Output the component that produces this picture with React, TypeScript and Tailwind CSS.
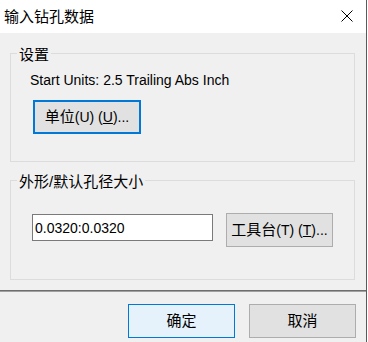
import React from "react";

const font = { fontFamily: '"Liberation Sans", "Noto Sans CJK SC", sans-serif' };

function Cjk({ children }: { children: React.ReactNode }) {
  return <span className="text-[15px]">{children}</span>;
}

function GroupBox({ title, className, children }: { title: string; className: string; children: React.ReactNode }) {
  return (
    <div className={`relative border border-[#dcdcdc] ${className}`}>
      <div className="absolute left-[6px] top-[-9px] h-[20px] bg-[#f0f0f0] px-[2px] text-[15px] leading-[20px] text-black">
        {title}
      </div>
      {children}
    </div>
  );
}

export default function App() {
  return (
    <div className="flex h-[342px] w-[368px] overflow-hidden bg-white text-[14px] leading-[20px] text-black" style={font}>
      <div className="flex w-[366px] flex-col bg-[#f0f0f0]">
        <div className="flex h-[33px] shrink-0 items-center justify-between bg-white pl-[4px] pr-[13px]">
          <span className="text-[15px] leading-[20px]">输入钻孔数据</span>
          <svg width="12" height="12" viewBox="0 0 12 12" className="mb-[1px]">
            <path d="M0.5 0.5 L11.5 11.5 M11.5 0.5 L0.5 11.5" stroke="#000" strokeWidth="1" fill="none" />
          </svg>
        </div>
        <div className="flex flex-col pl-[10px] pr-[11px] pt-[20px]">
          <GroupBox title="设置" className="h-[109px]">
            <div className="flex flex-col items-start pl-[19px] pt-[16px]">
              <div className="leading-[20px]">Start Units: 2.5 Trailing Abs Inch</div>
              <button className="ml-[3px] mt-[10px] flex h-[34px] w-[108px] items-center justify-center border-2 border-[#0078d7] bg-[#e1e1e1] leading-[20px]">
                <Cjk>单位</Cjk>(U) (<span className="underline">U</span>)...
              </button>
            </div>
          </GroupBox>
          <GroupBox title="外形/默认孔径大小" className="mt-[18px] h-[100px]">
            <div className="flex items-start pl-[21px] pt-[32px]">
              <div className="mt-[1px] flex h-[27px] w-[181px] items-center border border-[#7a7a7a] bg-white pl-[2px] leading-[20px]">
                0.0320:0.0320
              </div>
              <button className="ml-[13px] flex h-[34px] w-[107px] items-center justify-center border border-[#adadad] bg-[#e1e1e1] leading-[20px]">
                <Cjk>工具台</Cjk>(T) (<span className="underline">T</span>)...
              </button>
            </div>
          </GroupBox>
        </div>
        <div className="mt-[10px] h-px bg-[#6e6e6e]" />
        <div className="h-px bg-[#a0a0a0]" />
        <div className="flex justify-end gap-[14px] pr-[10px] pt-[12px]">
          <button className="flex h-[34px] w-[107px] items-center justify-center border border-[#0078d7] bg-[#e5f1fb] text-[15px] leading-[20px]">
            确定
          </button>
          <button className="flex h-[34px] w-[107px] items-center justify-center border border-[#adadad] bg-[#e1e1e1] text-[15px] leading-[20px]">
            取消
          </button>
        </div>
      </div>
      <div className="w-px bg-[#5a5a5a]" />
      <div className="w-px bg-white" />
    </div>
  );
}
